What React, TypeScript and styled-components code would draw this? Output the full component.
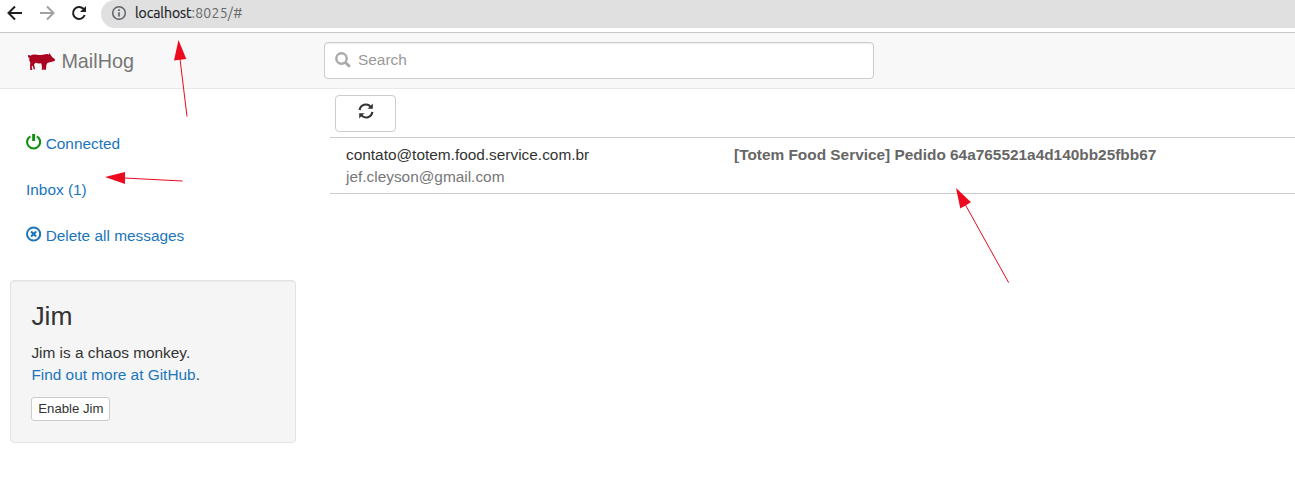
import React from "react";
import styled, { createGlobalStyle } from "styled-components";

const GlobalStyle = createGlobalStyle`
  *, *::before, *::after { box-sizing: border-box; }
  html, body { margin: 0; background: #fff; overflow: hidden; }
  body {
    font-family: "Liberation Sans", Arial, sans-serif;
    font-size: 15.4px;
    line-height: 22px;
    color: #333;
  }
`;

const Page = styled.div`
  position: relative;
  height: 480px;
  overflow: hidden;
`;

const BrowserBar = styled.div`
  display: flex;
  align-items: flex-start;
  height: 33px;
  padding-left: 7px;
  border-bottom: 1px solid #c9c9ca;
`;

const BrowserButton = styled.span<{ $dim?: boolean }>`
  display: flex;
  width: 16px;
  margin: 5px 16px 0 0;
  color: ${(p) => (p.$dim ? "#a0a1a3" : "#1f2023")};
`;

const AddressBar = styled.div`
  display: flex;
  align-items: center;
  flex: 1;
  height: 28px;
  margin: 0 -20px 0 -2px;
  padding: 0 0 2px 10px;
  border-radius: 14px 0 0 14px;
  background: #e0e0e1;
  gap: 8px;
`;

const Url = styled.span`
  font-family: Ubuntu, "Noto Sans", sans-serif;
  font-size: 14px;
  letter-spacing: -0.05px;
  color: #202124;
  -webkit-text-stroke: 0.2px #202124;
`;

const UrlRest = styled.span`
  color: #66686b;
  letter-spacing: 0.25px;
  -webkit-text-stroke: 0;
`;

const Navbar = styled.header`
  display: flex;
  height: 56px;
  background: #f8f8f8;
  border-bottom: 1px solid #e7e7e7;
`;

const Brand = styled.a`
  display: flex;
  align-items: center;
  width: 324px;
  height: 55px;
  padding-left: 27px;
  gap: 6.4px;
  font-size: 19.8px;
  color: #777;
`;

const SearchBox = styled.div`
  display: flex;
  align-items: center;
  width: 550px;
  height: 37px;
  margin-top: 9px;
  padding: 0 0 1px 10px;
  gap: 7px;
  border: 1px solid #ccc;
  border-radius: 4px;
  background: #fff;
  box-shadow: inset 0 1px 1px rgba(0, 0, 0, 0.075);
  color: #999;
`;

const Columns = styled.div`
  display: flex;
`;

const Sidebar = styled.aside`
  width: 330px;
  padding: 33px 34px 0 10px;
`;

const NavList = styled.nav`
  display: flex;
  flex-direction: column;
  gap: 2px;
`;

const NavItem = styled.a`
  display: flex;
  align-items: center;
  height: 44px;
  padding-left: 16px;
  gap: 4.3px;
  color: #1b75bb;
`;

const GlyphBox = styled.span<{ $color?: string }>`
  display: flex;
  margin-top: -4px;
  color: ${(p) => p.$color ?? "inherit"};
`;

const Well = styled.section`
  height: 163px;
  margin-top: 22px;
  padding: 20px 20.4px;
  border: 1px solid #e3e3e3;
  border-radius: 4px;
  background: #f5f5f5;
  box-shadow: inset 0 1px 1px rgba(0, 0, 0, 0.05);
`;

const WellTitle = styled.h3`
  margin: 0 0 11px;
  font-size: 26.4px;
  line-height: 30px;
  font-weight: 400;
`;

const WellText = styled.p`
  margin: 0 0 11px;
`;

const Link = styled.a`
  color: #1b75bb;
`;

const SmallButton = styled.button`
  display: block;
  height: 24px;
  width: 79px;
  padding: 0;
  border: 1px solid #ccc;
  border-radius: 3px;
  background: #fff;
  color: #333;
  font: 13.2px/20px "Liberation Sans", Arial, sans-serif;
`;

const Main = styled.main`
  flex: 1;
  padding-top: 6px;
`;

const RefreshButton = styled.button`
  display: flex;
  align-items: center;
  justify-content: center;
  width: 61px;
  height: 37px;
  margin: 0 0 5px 5px;
  padding: 0 0 5px;
  border: 1px solid #ccc;
  border-radius: 4px;
  background: #fff;
  color: #333;
`;

const MessageRow = styled.div`
  display: grid;
  grid-template-columns: 388px 1fr;
  height: 57px;
  padding: 6px 0 0 16px;
  border-top: 1px solid #ccc;
  border-bottom: 1px solid #ccc;
`;

const Recipient = styled.div`
  color: #777;
`;

const Subject = styled.div`
  font-weight: 700;
  color: #666;
`;

const ArrowLayer = styled.svg`
  position: absolute;
  inset: 0;
  pointer-events: none;
`;

const BackIcon = () => (
  <svg width="16" height="16" viewBox="0 0 16 16" fill="none" stroke="currentColor" strokeWidth="2">
    <path d="M15 8H2M8 1.5L1.5 8L8 14.5" />
  </svg>
);

const ForwardIcon = () => (
  <svg width="16" height="16" viewBox="0 0 16 16" fill="none" stroke="currentColor" strokeWidth="2">
    <path d="M1 8H14M8 1.5L14.5 8L8 14.5" />
  </svg>
);

const ReloadIcon = () => (
  <svg width="16" height="16" viewBox="0 0 16 16" fill="none" stroke="currentColor" strokeWidth="2">
    <path d="M13.7 10A6 6 0 1 1 12.4 3.8L14 5.4" />
    <path d="M15 1V7H9Z" fill="currentColor" stroke="none" />
  </svg>
);

const InfoIcon = () => (
  <svg width="16" height="16" viewBox="0 0 16 16" fill="none" stroke="#5f6368" strokeWidth="1.5">
    <circle cx="8" cy="8" r="6.3" />
    <path d="M8 7.2V11.6M8 4.3V5.9" strokeWidth="1.7" />
  </svg>
);

const PigIcon = () => (
  <svg width="28" height="18" viewBox="81 158 84 54" fill="#a9011f">
    <path d="M84 168L87 167L91 169Q98 164 110 166Q124 168 136 165L143 164L146 166L148 161L152 167L157 174L165 180L164 185L156 187L149 189L142 191L139 197L138 211L132 211L132 205L131 211L125 211L126 204L124 192Q114 193 106 190L102 196L104 203L105 210L101 210L98 199L95 201L96 206L97 212L91 212L90 200L91 190L88 184L88 176L84 173Z" />
  </svg>
);

const SearchIcon = () => (
  <svg width="16" height="16" viewBox="0 0 16 16" fill="none" stroke="#aaa">
    <circle cx="6.5" cy="6.5" r="5.2" strokeWidth="2.4" />
    <path d="M10.2 10.2L14.8 14.8" strokeWidth="3" />
  </svg>
);

const PowerIcon = () => (
  <svg width="15.4" height="16" viewBox="0.4 0 15.4 16" fill="none" stroke="currentColor" strokeWidth="2.1">
    <path d="M4.8 2.3A6.5 6.5 0 1 0 11.2 2.3" />
    <path d="M8 0V7" strokeWidth="2.8" />
  </svg>
);

const RemoveIcon = () => (
  <svg width="15.4" height="16" viewBox="0.4 0 15.4 16" fill="none" stroke="currentColor">
    <circle cx="8" cy="8" r="6.6" strokeWidth="2" />
    <path d="M5.5 5.5L10.5 10.5M10.5 5.5L5.5 10.5" strokeWidth="2.1" />
  </svg>
);

const RefreshIcon = () => (
  <svg width="16" height="16" viewBox="0 0 16 16" fill="none" stroke="currentColor" strokeWidth="2.1">
    <path d="M1.6 7A6.4 6.4 0 0 1 12.6 3.6M14.4 9A6.4 6.4 0 0 1 3.4 12.4" />
    <path d="M14.8 0.5V5.8H9.6ZM1.2 15.5V10.2H6.4Z" fill="currentColor" stroke="none" />
  </svg>
);

const arrows = [
  { head: "178.5,40 174,60.5 186.3,59", line: "M180 59L187 116.5" },
  { head: "105,177 125,172 125,184", line: "M124 178L182.5 181" },
  { head: "956,188 971,202.3 960.3,208.5", line: "M965.5 205L1008.7 282.7" },
];

export default function App() {
  return (
    <Page>
      <GlobalStyle />
      <BrowserBar>
        <BrowserButton><BackIcon /></BrowserButton>
        <BrowserButton $dim><ForwardIcon /></BrowserButton>
        <BrowserButton><ReloadIcon /></BrowserButton>
        <AddressBar>
          <InfoIcon />
          <Url>localhost<UrlRest>:8025/#</UrlRest></Url>
        </AddressBar>
      </BrowserBar>
      <Navbar>
        <Brand><PigIcon />MailHog</Brand>
        <SearchBox><SearchIcon />Search</SearchBox>
      </Navbar>
      <Columns>
        <Sidebar>
          <NavList>
            <NavItem><GlyphBox $color="#0a930a"><PowerIcon /></GlyphBox>Connected</NavItem>
            <NavItem>Inbox (1)</NavItem>
            <NavItem><GlyphBox><RemoveIcon /></GlyphBox>Delete all messages</NavItem>
          </NavList>
          <Well>
            <WellTitle>Jim</WellTitle>
            <WellText>
              Jim is a chaos monkey.<br />
              <Link>Find out more at GitHub</Link>.
            </WellText>
            <SmallButton>Enable Jim</SmallButton>
          </Well>
        </Sidebar>
        <Main>
          <RefreshButton><RefreshIcon /></RefreshButton>
          <MessageRow>
            <div>
              contato@totem.food.service.com.br
              <Recipient>jef.cleyson@gmail.com</Recipient>
            </div>
            <Subject>[Totem Food Service] Pedido 64a765521a4d140bb25fbb67</Subject>
          </MessageRow>
        </Main>
      </Columns>
      <ArrowLayer width="1295" height="480" viewBox="0 0 1295 480">
        {arrows.map((a) => (
          <g key={a.head} fill="#eb0a1e" stroke="#eb0a1e">
            <path d={a.line} strokeWidth="1" />
            <polygon points={a.head} stroke="none" />
          </g>
        ))}
      </ArrowLayer>
    </Page>
  );
}
